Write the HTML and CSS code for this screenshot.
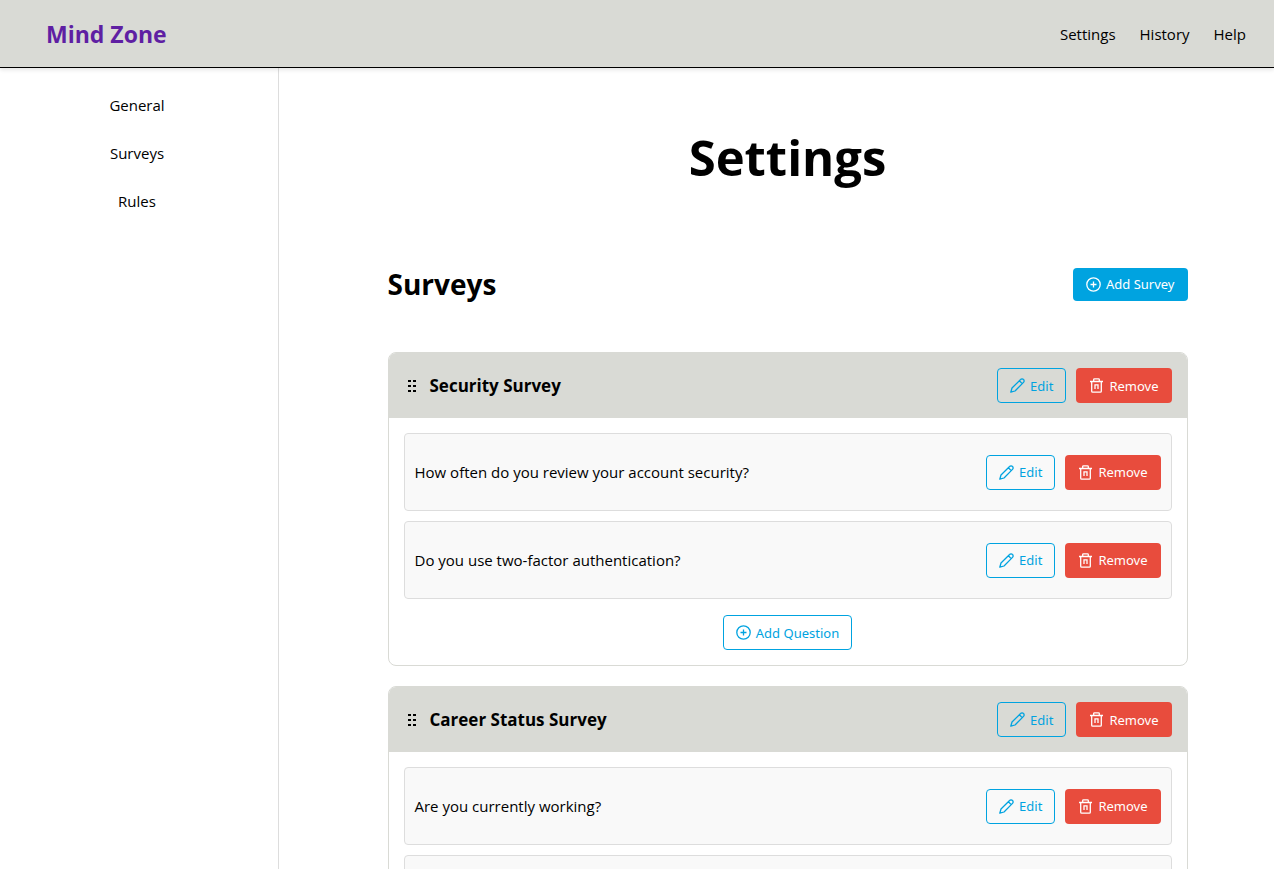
FILE: index.html
```html
<!DOCTYPE html>
<html lang="en">
<head>
<meta charset="utf-8">
<title>Mind Zone</title>
<link rel="stylesheet" href="styles.css">
</head>
<body>
<svg class="sprite" aria-hidden="true">
  <symbol id="pencil" viewBox="0 0 15 15"><path d="M.8 14.200L2 10 10.600 1.500a2 2 0 0 1 2.900 0 2 2 0 0 1 0 2.900L5 13zM9.400 2.800l2.800 2.800" stroke-linejoin="round"/></symbol>
  <symbol id="trash" viewBox="0 0 15 15"><path d="M1 3.500h13M4.700 3.500V1.600q0-.8.8-.8h4q.8 0 .8.800v1.900M2.700 3.500v9.700q0 1 1 1h7.600q1 0 1-1V3.500M6 11V6.800h3V11"/></symbol>
  <symbol id="plus" viewBox="0 0 15 15"><circle cx="7.500" cy="7.500" r="6.700"/><path d="M7.500 4.500v6M4.500 7.500h6"/></symbol>
  <symbol id="grip" viewBox="0 0 16 12"><path d="M4 0h3v2H4zM9 0h3v2H9zM4 5h3v2H4zM9 5h3v2H9zM4 10h3v2H4zM9 10h3v2H9z"/></symbol>
</svg>
<div class="app">
  <header class="topbar">
    <a class="brand" href="#">Mind Zone</a>
    <nav class="topnav"><a href="#">Settings</a><a href="#">History</a><a href="#">Help</a></nav>
  </header>
  <div class="body">
    <nav class="sidebar"><a href="#">General</a><a href="#">Surveys</a><a href="#">Rules</a></nav>
    <main class="main">
      <div class="content">
        <h1>Settings</h1>
        <div class="section-head">
          <h2>Surveys</h2>
          <button class="btn primary"><svg><use href="#plus"/></svg>Add Survey</button>
        </div>
        <section class="card">
          <div class="card-head">
            <svg class="grip"><use href="#grip"/></svg>
            <h3>Security Survey</h3>
            <button class="btn outline"><svg><use href="#pencil"/></svg>Edit</button>
            <button class="btn danger"><svg><use href="#trash"/></svg>Remove</button>
          </div>
          <div class="card-body">
            <div class="question">
              <p>How often do you review your account security?</p>
              <button class="btn outline"><svg><use href="#pencil"/></svg>Edit</button>
              <button class="btn danger"><svg><use href="#trash"/></svg>Remove</button>
            </div>
            <div class="question">
              <p>Do you use two-factor authentication?</p>
              <button class="btn outline"><svg><use href="#pencil"/></svg>Edit</button>
              <button class="btn danger"><svg><use href="#trash"/></svg>Remove</button>
            </div>
            <button class="btn outline add"><svg><use href="#plus"/></svg>Add Question</button>
          </div>
        </section>
        <section class="card">
          <div class="card-head">
            <svg class="grip"><use href="#grip"/></svg>
            <h3>Career Status Survey</h3>
            <button class="btn outline"><svg><use href="#pencil"/></svg>Edit</button>
            <button class="btn danger"><svg><use href="#trash"/></svg>Remove</button>
          </div>
          <div class="card-body">
            <div class="question">
              <p>Are you currently working?</p>
              <button class="btn outline"><svg><use href="#pencil"/></svg>Edit</button>
              <button class="btn danger"><svg><use href="#trash"/></svg>Remove</button>
            </div>
            <div class="question"></div>
          </div>
        </section>
      </div>
    </main>
  </div>
</div>
</body>
</html>
```
FILE: styles.css
```css
* { box-sizing: border-box; }
body {
  margin: 0;
  background: #fff;
  color: #000;
  font: 15px/24px "Segoe UI", "Open Sans", sans-serif;
}
.sprite { position: absolute; width: 0; height: 0; }
a { color: inherit; text-decoration: none; }
h1, h2, h3, p { margin: 0; }
.app { display: flex; flex-direction: column; height: 100vh; }
.topbar {
  display: flex;
  align-items: center;
  justify-content: space-between;
  padding: 16px 28px 15px 46px;
  background: #d9dad5;
  border-bottom: 1px solid #000;
  box-shadow: 0 2px 4px rgba(0, 0, 0, .1);
  z-index: 1;
}
.brand { color: #5f1fa3; font-size: 23px; line-height: 36px; font-weight: 700; }
.topnav { display: flex; gap: 24px; }
.body { flex: 1; display: flex; min-height: 0; }
.sidebar {
  flex: none;
  display: flex;
  flex-direction: column;
  align-items: center;
  gap: 24px;
  width: 279px;
  padding: 25px 4px 0 0;
  border-right: 1px solid #ddd;
}
.main {
  flex: 1;
  padding: 50px 0 0 22px;
  overflow-y: auto;
  scrollbar-width: none;
}
.content { max-width: 800px; margin: 0 auto; }
h1 { font-size: 49px; line-height: 78px; text-align: center; }
.section-head {
  display: flex;
  align-items: center;
  justify-content: space-between;
  margin: 68px 0 48px;
}
h2 { font-size: 28px; line-height: 40px; }
.btn {
  display: inline-flex;
  align-items: center;
  flex: none;
  gap: 5px;
  height: 35px;
  padding: 0 12px;
  border: 1px solid transparent;
  border-radius: 4px;
  font: 13px/20px "Noto Sans", sans-serif;
  cursor: pointer;
}
.btn svg { width: 15px; height: 15px; fill: none; stroke: currentColor; stroke-width: 1.300; }
.primary { height: 33px; background: #00a3e0; color: #fff; }
.outline { background: transparent; border-color: #00a3e0; color: #00a3e0; }
.danger { background: #e84c3d; color: #fff; }
.card {
  margin-bottom: 20px;
  border: 1px solid #d9dad5;
  border-radius: 8px;
  overflow: hidden;
}
.card-head {
  display: flex;
  align-items: center;
  gap: 10px;
  padding: 15px;
  background: #d9dad5;
}
.card-head .grip { width: 16px; height: 12px; }
h3 { flex: 1; font-size: 17px; line-height: 24px; }
.card-body { display: flex; flex-direction: column; gap: 10px; padding: 15px; }
.question {
  display: flex;
  align-items: center;
  gap: 10px;
  min-height: 78px;
  padding: 10px;
  background: #f9f9f9;
  border: 1px solid #ddd;
  border-radius: 4px;
}
.question p { flex: 1; }
.add { align-self: center; margin-top: 6px; }
```
